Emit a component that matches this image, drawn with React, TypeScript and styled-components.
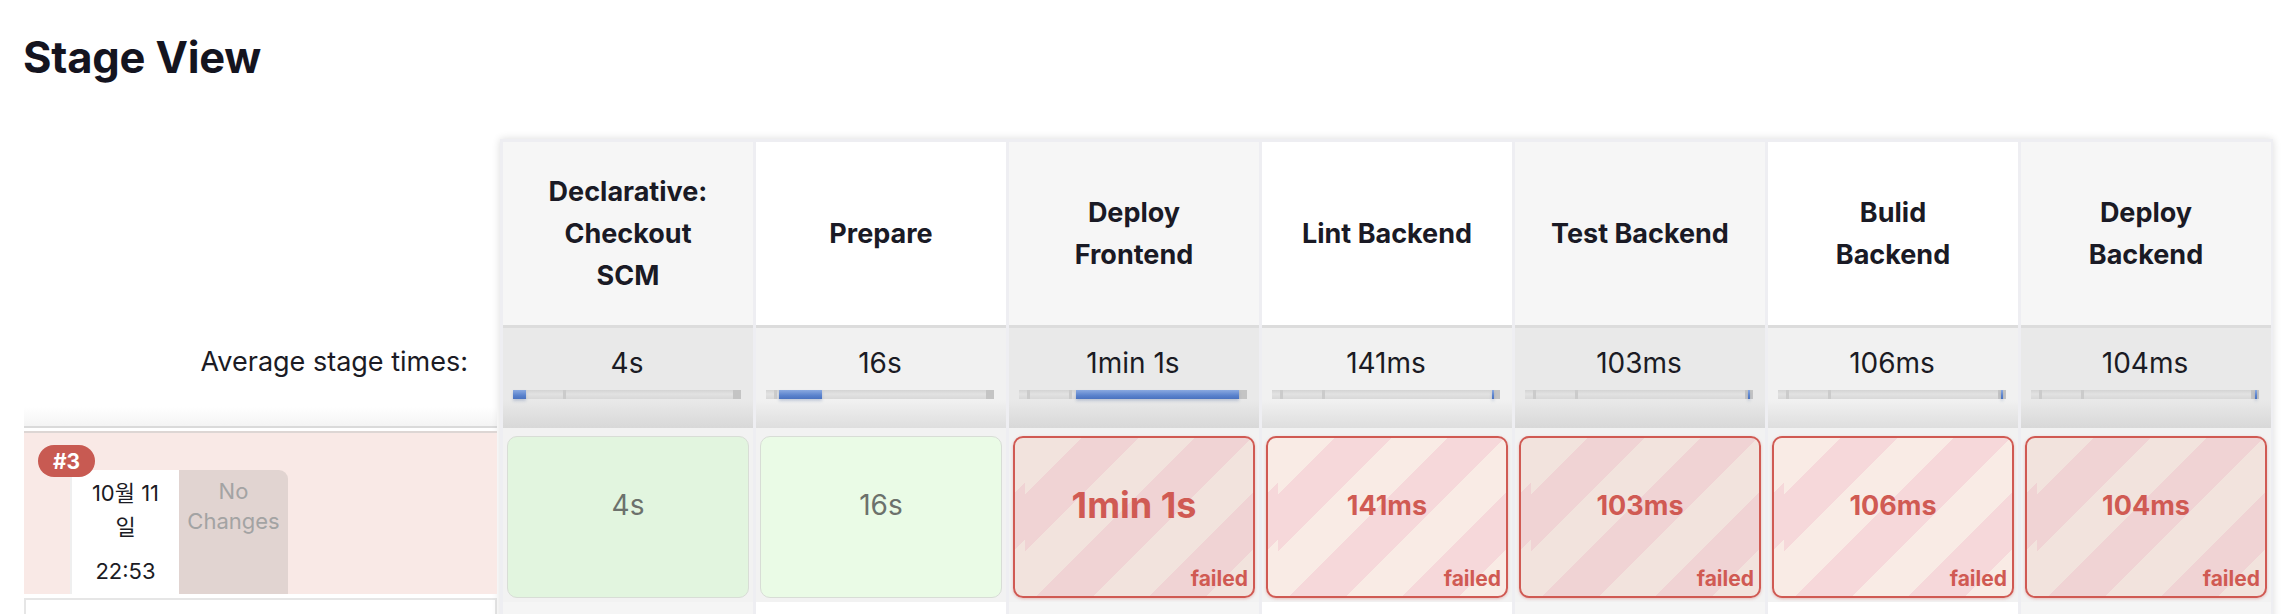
import styled, { createGlobalStyle } from 'styled-components';

const GlobalStyle = createGlobalStyle`
  body {
    margin: 0;
    background: #ffffff;
    font-family: Inter, 'Noto Sans CJK KR', 'Noto Sans', sans-serif;
    color: #14141f;
  }
`;

const Page = styled.div`
  padding-left: 24px;
  width: 2292px;
  box-sizing: border-box;
`;

const Title = styled.h2`
  margin: 30px 0 55px -1px;
  font-size: 43.5px;
  line-height: 54px;
  font-weight: 700;
  letter-spacing: -0.2px;
`;

const Table = styled.div`
  display: flex;
  align-items: flex-start;
`;

const LeftColumn = styled.div`
  width: 473px;
  margin-right: 3px;
  display: flex;
  flex-direction: column;
`;

const HeaderSpacer = styled.div`
  height: 191px;
`;

const AvgLabel = styled.div`
  height: 96px;
  padding: 0 29px 0 0;
  display: flex;
  align-items: flex-start;
  justify-content: flex-end;
  font-size: 27px;
  line-height: 30px;
  color: #1b1b24;
  background: linear-gradient(#ffffff 80%, #f4f4f4);
  border-bottom: 2px solid #dadada;
  box-sizing: content-box;
  span {
    margin-top: 17px;
  }
`;

const BuildRow = styled.div`
  position: relative;
  margin-top: 3px;
  border-top: 2px solid #ddd6d4;
  height: 163px;
  background: #f9e9e6;
  display: flex;
  align-items: flex-start;
  padding: 37px 0 0 46px;
  box-sizing: border-box;
`;

const Badge = styled.div`
  position: absolute;
  left: 14px;
  top: 12px;
  width: 57px;
  height: 32px;
  border-radius: 16px;
  background: #c85a52;
  color: #fff;
  font-size: 21px;
  font-weight: 700;
  display: flex;
  align-items: center;
  justify-content: center;
  z-index: 2;
`;

const DateCard = styled.div`
  width: 109px;
  height: 124px;
  background: #ffffff;
  border-left: 2px solid #efefef;
  box-sizing: border-box;
  text-align: center;
  font-size: 22px;
  line-height: 34px;
  color: #1b1b24;
  padding: 6px 10px 0;
`;

const TimeText = styled.div`
  margin-top: 10px;
`;

const ChangesCard = styled.div`
  width: 109px;
  height: 124px;
  background: #e1d4d1;
  border-radius: 0 9px 0 0;
  text-align: center;
  font-size: 22px;
  line-height: 30px;
  color: #a3a3a3;
  padding-top: 6px;
  box-sizing: border-box;
`;

const NextRowLeft = styled.div`
  margin-top: 4px;
  height: 40px;
  border: 2px solid #e6e6e6;
  background: #fff;
`;

const StageTable = styled.div`
  display: flex;
  gap: 3px;
  padding: 3px 2px 0 3px;
  background: #eeeef2;
  box-shadow: 0 0 8px rgba(0, 0, 0, 0.14);
`;

const StageColumn = styled.div`
  width: 250px;
  display: flex;
  flex-direction: column;
  background: #f2f2f2;
`;

const StageHeader = styled.div<{ $shade: boolean }>`
  height: 183px;
  display: flex;
  align-items: center;
  justify-content: center;
  text-align: center;
  white-space: pre-line;
  font-size: 27px;
  line-height: 42px;
  font-weight: 700;
  color: #1a1a25;
  background: ${(p) => (p.$shade ? '#f6f6f6' : '#ffffff')};
`;

const AvgCell = styled.div<{ $shade: boolean }>`
  border-top: 3px solid #dcdcdc;
  display: flex;
  flex-direction: column;
  align-items: stretch;
  padding: 20px 12px 0 10px;
  height: 80px;
  background: ${(p) =>
    p.$shade
      ? 'linear-gradient(#e9e9e9 0%, #e9e9e9 72%, #d8d8d8 100%)'
      : 'linear-gradient(#f1f1f1 0%, #f1f1f1 72%, #dedede 100%)'};
`;

const AvgTime = styled.div`
  text-align: center;
  font-size: 28px;
  line-height: 30px;
  color: #1b1b24;
`;

const Bar = styled.div`
  position: relative;
  margin-top: 12px;
  height: 9px;
  background: linear-gradient(#d4d4d4, #e2e2e2 45%, #d8d8d8);
  &::after {
    content: '';
    position: absolute;
    right: 0;
    top: 0;
    bottom: 0;
    width: 8px;
    background: #c4c4c4;
  }
`;

const BarTick = styled.div<{ $at: number }>`
  position: absolute;
  top: 0;
  bottom: 0;
  left: ${(p) => p.$at}px;
  width: 3px;
  background: #cbcbcb;
`;

const BarFill = styled.div`
  position: absolute;
  top: 0;
  bottom: 0;
  min-width: 2px;
  background: linear-gradient(#8aa9e0, #5b83cd 60%, #4a72bf);
  box-shadow: 0 2px 3px rgba(60, 90, 150, 0.25);
  z-index: 1;
`;

const RunSlot = styled.div`
  padding: 8px 4px 2px 4px;
`;

const RunBox = styled.div<{ $failed: boolean; $shade: boolean }>`
  height: 162px;
  box-sizing: border-box;
  border-radius: 10px;
  display: flex;
  flex-direction: column;
  padding: 0 5px 6px 0;
  border: ${(p) => (p.$failed ? '2.5px solid #d05a53' : '1.5px solid #d8ddd6')};
  box-shadow: ${(p) => (p.$failed ? '0 1px 3px rgba(208, 90, 83, 0.35)' : 'none')};
  background: ${(p) =>
    p.$failed
      ? p.$shade
        ? 'repeating-linear-gradient(-45deg, #f2e3dd 0 40px, #f0d3d4 40px 80px)'
        : 'repeating-linear-gradient(-45deg, #f9ebe5 0 40px, #f6d8da 40px 80px)'
      : p.$shade
        ? '#e2f5df'
        : '#eafbe6'};
  background-position: 10px 0;
`;

const RunTime = styled.div<{ $failed: boolean; $big: boolean }>`
  text-align: center;
  padding-left: 5px;
  margin-top: ${(p) => (p.$big ? '46px' : '51px')};
  font-size: ${(p) => (p.$big ? '36px' : p.$failed ? '27px' : '28px')};
  line-height: ${(p) => (p.$big ? '42px' : '34px')};
  font-weight: ${(p) => (p.$failed ? 700 : 400)};
  color: ${(p) => (p.$failed ? '#d05a53' : '#6c716c')};
`;

const FailedTag = styled.div`
  margin-top: auto;
  align-self: flex-end;
  font-size: 21px;
  line-height: 22px;
  font-weight: 700;
  color: #d05a53;
`;

const NextRowCell = styled.div<{ $shade: boolean }>`
  margin-top: 2px;
  height: 40px;
  background: ${(p) => (p.$shade ? '#f5f5f5' : '#ffffff')};
`;

type Stage = {
  name: string;
  avg: string;
  bar: [number, number];
  run: string;
  failed: boolean;
  big?: boolean;
};

const stages: Stage[] = [
  { name: 'Declarative:\nCheckout\nSCM', avg: '4s', bar: [0, 13], run: '4s', failed: false },
  { name: 'Prepare', avg: '16s', bar: [13, 43], run: '16s', failed: false },
  { name: 'Deploy\nFrontend', avg: '1min 1s', bar: [57, 163], run: '1min 1s', failed: true, big: true },
  { name: 'Lint Backend', avg: '141ms', bar: [220, 2], run: '141ms', failed: true },
  { name: 'Test Backend', avg: '103ms', bar: [223, 2], run: '103ms', failed: true },
  { name: 'Bulid\nBackend', avg: '106ms', bar: [223, 2], run: '106ms', failed: true },
  { name: 'Deploy\nBackend', avg: '104ms', bar: [224, 2], run: '104ms', failed: true },
];

function App() {
  return (
    <Page>
      <GlobalStyle />
      <Title>Stage View</Title>
      <Table>
        <LeftColumn>
          <HeaderSpacer />
          <AvgLabel>
            <span>Average stage times:</span>
          </AvgLabel>
          <BuildRow>
            <Badge>#3</Badge>
            <DateCard>
              <div>10월 11 일</div>
              <TimeText>22:53</TimeText>
            </DateCard>
            <ChangesCard>
              No
              <br />
              Changes
            </ChangesCard>
          </BuildRow>
          <NextRowLeft />
        </LeftColumn>

        <StageTable>
          {stages.map((stage, i) => {
            const shade = i % 2 === 0;
            return (
              <StageColumn key={stage.name}>
                <StageHeader $shade={shade}>{stage.name}</StageHeader>
                <AvgCell $shade={shade}>
                  <AvgTime>{stage.avg}</AvgTime>
                  <Bar>
                    <BarTick $at={8} />
                    <BarTick $at={50} />
                    <BarFill style={{ left: stage.bar[0], width: stage.bar[1] }} />
                  </Bar>
                </AvgCell>
                <RunSlot>
                  <RunBox $failed={stage.failed} $shade={shade}>
                    <RunTime $failed={stage.failed} $big={!!stage.big}>
                      {stage.run}
                    </RunTime>
                    {stage.failed && <FailedTag>failed</FailedTag>}
                  </RunBox>
                </RunSlot>
                <NextRowCell $shade={shade} />
              </StageColumn>
            );
          })}
        </StageTable>
      </Table>
    </Page>
  );
}

export default App;
